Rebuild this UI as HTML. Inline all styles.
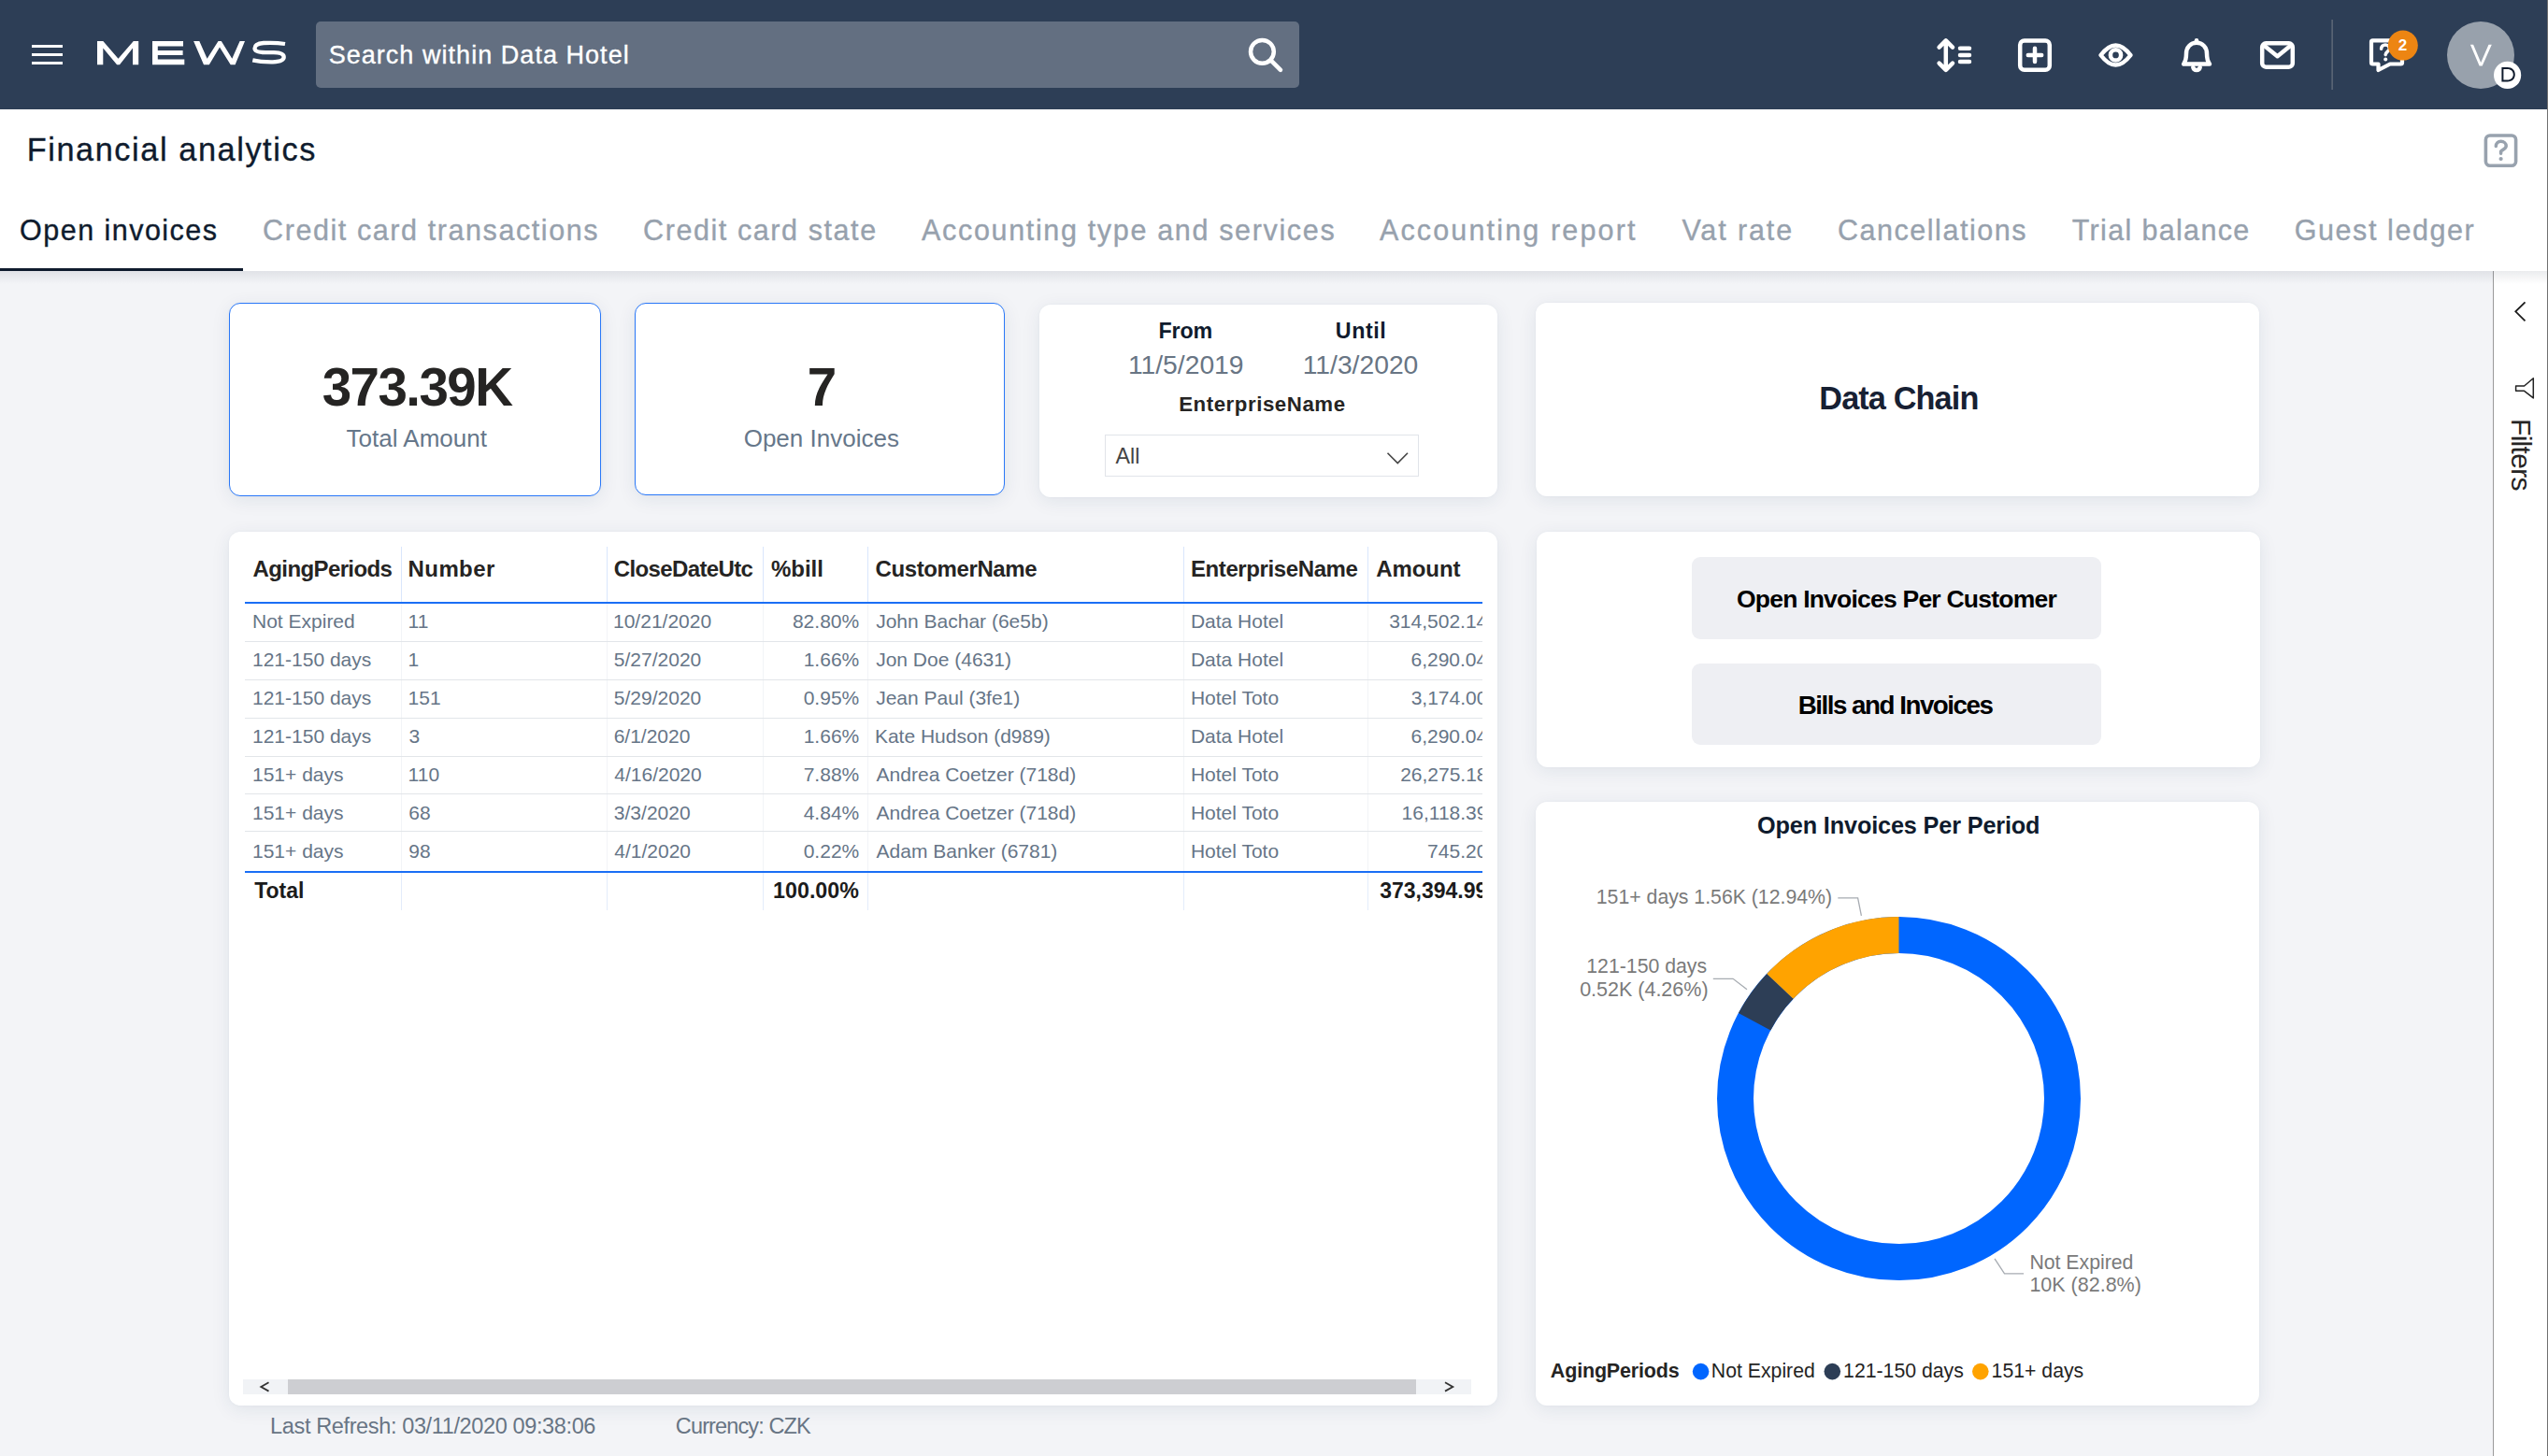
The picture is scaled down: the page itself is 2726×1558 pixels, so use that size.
<!DOCTYPE html>
<html><head><meta charset="utf-8"><title>Financial analytics</title>
<style>
*{box-sizing:border-box;margin:0;padding:0}
html,body{width:2726px;height:1558px;overflow:hidden;background:#f3f4f7;font-family:"Liberation Sans",sans-serif}
.a{position:absolute}
.t{position:absolute;white-space:pre;line-height:1;font-family:"Liberation Sans",sans-serif}
.mt{-webkit-text-stroke:0.35px currentColor}
#hdr{left:0;top:0;width:2725px;height:117px;background:#2d3e56}
#titlebar{left:0;top:117px;width:2725px;height:173px;background:#fff}
#content{left:0;top:290px;width:2667px;height:1268px;background:#f3f4f7;overflow:hidden}
#tabshadow{left:0;top:290px;width:2725px;height:14px;background:linear-gradient(rgba(60,70,90,.10),rgba(60,70,90,0))}
#fpane{left:2667px;top:290px;width:58px;height:1268px;background:#fff;border-left:1px solid #9a9a9a}
#rborder{left:2725px;top:0;width:1px;height:1558px;background:#707070}
.card{position:absolute;background:#fff;border-radius:12px;box-shadow:0 4px 20px rgba(25,55,90,.085),0 0 3px rgba(25,55,90,.04)}
.kpi{border:1.5px solid #2a78f8}
.hl{position:absolute;height:1px;background:#e2e5e9}
.vl{position:absolute;width:1px}
</style></head><body>
<div id="hdr" class="a">
 <div class="a" style="left:34px;top:48px;width:33px;height:3px;background:#fff"></div>
 <div class="a" style="left:34px;top:57px;width:33px;height:3px;background:#fff"></div>
 <div class="a" style="left:34px;top:66px;width:33px;height:3px;background:#fff"></div>
 <div class="a" style="left:338px;top:23px;width:1052px;height:71px;background:#636f81;border-radius:5px"></div>
</div>
<svg class="a" style="left:0;top:0" width="2726" height="117" viewBox="0 0 2726 117">
 <g fill="#fff">
  <path d="M104,44 L110.3,44 L126.5,62.7 L142.8,44 L148.2,44 L148.2,69.2 L142,69.2 L142,51.6 L128,69.2 L125.1,69.2 L110.3,51.6 L110.3,69.2 L104,69.2 Z"/>
  <path d="M163,44 L196,44 L196,49.6 L168.8,49.6 L168.8,54 L195.6,54 L195.6,59 L168.8,59 L168.8,63.5 L197.3,63.5 L197.3,69.2 L163,69.2 Z"/>
  <path d="M207.1,44 L213.3,44 L221.6,62.7 L233.5,44 L236.8,44 L248.3,62.7 L256.6,44 L262,44 L251.6,69.2 L246.7,69.2 L235,50.4 L223.8,69.2 L218,69.2 Z"/>
 </g>
 <path d="M305,47 C297,45.7 289,45.6 282,46 C275.5,46.5 272.5,48.8 272.5,51.7 C272.5,54.6 276,56 284,56.1 L293,56.2 C300.5,56.4 303.7,58.3 303.7,61.1 C303.7,64 300,66.1 292,66.3 C283.5,66.4 276.5,65.9 270.3,64.4" fill="none" stroke="#fff" stroke-width="4.3"/>
 <g fill="none" stroke="#fff" stroke-width="4.5" stroke-linecap="round" stroke-linejoin="round">
  <circle cx="1350.4" cy="55.3" r="12.4"/>
  <path d="M1360,64.8 L1370,74.8"/>
  <path d="M2081.8,43.5 L2081.8,74.8 M2074.6,50.6 L2081.8,43.4 L2089,50.6 M2074.6,67.6 L2081.8,74.8 L2089,67.6"/>
  <path d="M2097,51.8 L2107,51.8 M2097,58.9 L2107,58.9 M2097,65.9 L2107,65.9"/>
  <rect x="2161.2" y="43.4" width="31.6" height="31.4" rx="4.5"/>
  <path d="M2169.8,58.9 L2184.2,58.9 M2177,51.7 L2177,66.1"/>
  <path d="M2247.5,59 C2254,50.5 2258.5,48.4 2263.5,48.4 C2268.5,48.4 2273,50.5 2279.5,59 C2273,67.5 2268.5,69.6 2263.5,69.6 C2258.5,69.6 2254,67.5 2247.5,59 Z"/>
  <circle cx="2263.5" cy="58.9" r="5.6"/>
  <path d="M2336.2,68.6 L2364,68.6 C2361.3,65 2361,61 2361,57.5 C2361,50.3 2356.3,45.8 2350,45.8 C2343.7,45.8 2339,50.3 2339,57.5 C2339,61 2338.7,65 2336.2,68.6 Z"/>
  <path d="M2350,43.3 L2350,44.5"/>
  <path d="M2346.3,72 A3.8,3.8 0 0 0 2353.7,72"/>
  <rect x="2420.2" y="46.3" width="32.6" height="25.4" rx="4"/>
  <path d="M2422,48.6 L2436.5,60.2 L2451,48.6"/>
  <path d="M2540.5,43.3 L2568.5,43.3 C2569.5,43.3 2570,43.8 2570,44.8 L2570,67 C2570,68 2569.5,68.5 2568.5,68.5 L2557,68.5 L2544.5,75 L2544.5,68.5 L2538.5,68.5 C2537.5,68.5 2537,68 2537,67 L2537,44.8 C2537,43.8 2537.5,43.3 2538.5,43.3 Z" stroke-width="4.2"/>
 </g>
 <g fill="none" stroke="#fff" stroke-width="3.6" stroke-linecap="round">
  <path d="M2547.6,52.3 C2547.6,49.5 2549.6,48 2552,48 C2554.5,48 2556.4,49.6 2556.4,52 C2556.4,55 2552.2,55.5 2552.2,58.6"/>
 </g>
 <circle cx="2552.2" cy="63.6" r="2" fill="#fff"/>
 <rect x="2494.5" y="21" width="1.2" height="75" fill="#6b7380"/>
 <circle cx="2570.8" cy="48.6" r="16" fill="#ed8512"/>
 <circle cx="2654" cy="59" r="36" fill="#98a1ac"/>
 <path d="M2642.9,47.8 L2646.1,47.8 L2654.2,66.9 L2662.5,47.8 L2665.8,47.8 L2655.7,70.5 L2652.6,70.5 Z" fill="#fff"/>
 <circle cx="2682.6" cy="80.4" r="14.6" fill="#fff"/>
 <path fill-rule="evenodd" fill="#0f1b2d" d="M2676.4,72.1 L2682.6,72.1 C2687.7,72.1 2690.8,75.3 2690.8,79.75 C2690.8,84.2 2687.7,87.4 2682.6,87.4 L2676.4,87.4 Z M2678.4,74 L2682.6,74 C2686.4,74 2688.8,76.3 2688.8,79.75 C2688.8,83.2 2686.4,85.5 2682.6,85.5 L2678.4,85.5 Z"/>
</svg>
<div id="titlebar" class="a"></div>
<svg class="a" style="left:2640px;top:130px" width="70" height="60" viewBox="2640 130 70 60">
 <rect x="2659.4" y="145" width="32.2" height="32.2" rx="4.5" fill="none" stroke="#98a2ae" stroke-width="3.6"/>
 <path d="M2670.3,156.6 C2670.3,153.3 2672.6,151.3 2675.6,151.3 C2678.8,151.3 2681.2,153.4 2681.2,156.3 C2681.2,159.2 2677.2,159.8 2675.6,162 L2675.6,164.3" fill="none" stroke="#98a2ae" stroke-width="3.5" stroke-linecap="round"/>
 <circle cx="2675.6" cy="170" r="2.1" fill="#98a2ae"/>
</svg>
<div class="a" style="left:0;top:287px;width:260px;height:3px;background:#0f1b2d"></div>
<div id="content" class="a"></div>
<div id="fpane" class="a"></div>
<div id="tabshadow" class="a"></div>
<svg class="a" style="left:2668px;top:300px" width="57" height="240" viewBox="2668 300 57 240">
 <path d="M2701.5,323.3 L2691.3,333.3 L2701.5,343.3" fill="none" stroke="#1c1c1c" stroke-width="1.8"/>
 <path d="M2710.3,404.8 L2710.3,425.9 L2700.6,418.3 L2691.6,418.3 L2691.6,413 L2700.6,413 Z" fill="none" stroke="#222" stroke-width="1.5" stroke-linejoin="round"/>
</svg>
<div class="t" style="left:2688px;top:448px;font-size:30px;color:#252423;transform-origin:0 0;transform:translate(24px,0) rotate(90deg);letter-spacing:-0.7px">Filters</div>
<div id="rborder" class="a"></div>

<!-- cards -->
<div class="card kpi" style="left:245px;top:324px;width:398px;height:207px"></div>
<div class="card kpi" style="left:679px;top:324px;width:396px;height:206px"></div>
<div class="card" style="left:1112px;top:326px;width:490px;height:206px"></div>
<div class="a" style="left:1182px;top:465px;width:336px;height:45px;border:1px solid #e1e4e9;background:#fff"></div>
<svg class="a" style="left:1480px;top:480px" width="30" height="20" viewBox="1480 480 30 20">
 <path d="M1484.5,484.8 L1495.3,495.6 L1506,484.8" fill="none" stroke="#444" stroke-width="1.6"/>
</svg>
<div class="card" style="left:1643px;top:324px;width:774px;height:207px"></div>
<div class="card" style="left:245px;top:569px;width:1357px;height:935px"></div>
<div class="card" style="left:1644px;top:569px;width:774px;height:252px"></div>
<div class="a" style="left:1810px;top:596px;width:438px;height:88px;background:#eeeff3;border-radius:9px"></div>
<div class="a" style="left:1810px;top:710px;width:438px;height:87px;background:#eeeff3;border-radius:9px"></div>
<div class="card" style="left:1643px;top:858px;width:774px;height:646px"></div>

<!-- table grid -->
<div class="vl" style="left:429px;top:585px;height:60px;background:#d9e6fc"></div>
<div class="vl" style="left:649px;top:585px;height:60px;background:#d9e6fc"></div>
<div class="vl" style="left:816px;top:585px;height:60px;background:#d9e6fc"></div>
<div class="vl" style="left:928px;top:585px;height:60px;background:#d9e6fc"></div>
<div class="vl" style="left:1266px;top:585px;height:60px;background:#d9e6fc"></div>
<div class="vl" style="left:1463px;top:585px;height:60px;background:#d9e6fc"></div>
<div class="vl" style="left:429px;top:646px;height:287px;background:#f2f4f7"></div>
<div class="vl" style="left:649px;top:646px;height:287px;background:#f2f4f7"></div>
<div class="vl" style="left:816px;top:646px;height:287px;background:#f2f4f7"></div>
<div class="vl" style="left:928px;top:646px;height:287px;background:#f2f4f7"></div>
<div class="vl" style="left:1266px;top:646px;height:287px;background:#f2f4f7"></div>
<div class="vl" style="left:1463px;top:646px;height:287px;background:#f2f4f7"></div>
<div class="vl" style="left:429px;top:934px;height:40px;background:#e3ecfb"></div>
<div class="vl" style="left:649px;top:934px;height:40px;background:#e3ecfb"></div>
<div class="vl" style="left:816px;top:934px;height:40px;background:#e3ecfb"></div>
<div class="vl" style="left:928px;top:934px;height:40px;background:#e3ecfb"></div>
<div class="vl" style="left:1266px;top:934px;height:40px;background:#e3ecfb"></div>
<div class="vl" style="left:1463px;top:934px;height:40px;background:#e3ecfb"></div>
<div class="a" style="left:262px;top:644px;width:1324px;height:2px;background:#1a6ef5"></div>
<div class="hl" style="left:262px;top:686px;width:1324px"></div>
<div class="hl" style="left:262px;top:727px;width:1324px"></div>
<div class="hl" style="left:262px;top:768px;width:1324px"></div>
<div class="hl" style="left:262px;top:809px;width:1324px"></div>
<div class="hl" style="left:262px;top:849px;width:1324px"></div>
<div class="hl" style="left:262px;top:889px;width:1324px"></div>
<div class="a" style="left:262px;top:932px;width:1324px;height:2px;background:#1a6ef5"></div>
<!-- scrollbar -->
<div class="a" style="left:260px;top:1476px;width:1314px;height:16px;background:#f1f3f6"></div>
<div class="a" style="left:308px;top:1476px;width:1207px;height:16px;background:#cdced2"></div>
<svg class="a" style="left:270px;top:1474px" width="1300" height="20" viewBox="270 1474 1300 20">
 <path d="M287.5,1479.3 L279.3,1484 L287.5,1488.6" fill="none" stroke="#333" stroke-width="1.8"/>
 <path d="M1546,1479.3 L1554.3,1484 L1546,1488.6" fill="none" stroke="#333" stroke-width="1.8"/>
</svg>
<!-- donut -->
<svg class="a" style="left:1643px;top:858px" width="774" height="646" viewBox="1643 858 774 646">
 <g fill="none" stroke-width="39">
  <circle cx="2031.5" cy="1175.6" r="175" stroke="#0066ff"/>
 </g>
 <g fill="none" stroke-width="39"><path d="M1877.10,1093.23 A175,175 0 0 1 1904.39,1055.32" stroke="#2d3e56"/><path d="M1904.39,1055.32 A175,175 0 0 1 2031.50,1000.60" stroke="#ffa300"/></g>
 <g fill="none" stroke="#a6abb1" stroke-width="1.3">
  <path d="M1966.3,960.8 L1987.6,960.8 L1991.4,979.9"/>
  <path d="M1832.8,1047.3 L1854.1,1047.3 L1869,1058.7"/>
  <path d="M2134,1346.9 L2144.5,1362.9 L2165.1,1362.9"/>
 </g>
 <circle cx="1819.6" cy="1467.6" r="8.8" fill="#0066ff"/>
 <circle cx="1960.3" cy="1467.6" r="8.8" fill="#2d3e56"/>
 <circle cx="2118.8" cy="1467.6" r="8.8" fill="#ffa300"/>
</svg>
<div class="t mt" style="left:351.65px;top:46px;font-size:27.0px;color:#fff;letter-spacing:1.04px;">Search within Data Hotel</div>
<div class="t" style="left:2565.69px;top:40px;font-size:17.0px;color:#fff;font-weight:bold;">2</div>
<div class="t mt" style="left:28.66px;top:143px;font-size:34.25px;color:#0f1b2d;letter-spacing:1.60px;">Financial analytics</div>
<div class="t mt" style="left:21.08px;top:231px;font-size:30.5px;color:#0f1b2d;letter-spacing:1.47px;">Open invoices</div>
<div class="t mt" style="left:281.08px;top:231px;font-size:30.5px;color:#97a1ad;letter-spacing:1.58px;">Credit card transactions</div>
<div class="t mt" style="left:688.08px;top:231px;font-size:30.5px;color:#97a1ad;letter-spacing:1.58px;">Credit card state</div>
<div class="t mt" style="left:986.10px;top:231px;font-size:30.5px;color:#97a1ad;letter-spacing:1.66px;">Accounting type and services</div>
<div class="t mt" style="left:1475.90px;top:231px;font-size:30.5px;color:#97a1ad;letter-spacing:2.16px;">Accounting report</div>
<div class="t mt" style="left:1799.39px;top:231px;font-size:30.5px;color:#97a1ad;letter-spacing:1.89px;">Vat rate</div>
<div class="t mt" style="left:1965.88px;top:231px;font-size:30.5px;color:#97a1ad;letter-spacing:1.55px;">Cancellations</div>
<div class="t mt" style="left:2216.79px;top:231px;font-size:30.5px;color:#97a1ad;letter-spacing:1.33px;">Trial balance</div>
<div class="t mt" style="left:2454.67px;top:231px;font-size:30.5px;color:#97a1ad;letter-spacing:1.59px;">Guest ledger</div>
<div class="t" style="left:344.67px;top:387px;font-size:56.5px;color:#252423;font-weight:bold;letter-spacing:-1.54px;">373.39K</div>
<div class="t" style="left:370.58px;top:456px;font-size:26.0px;color:#66778a;">Total Amount</div>
<div class="t" style="left:863.64px;top:387px;font-size:56.5px;color:#252423;font-weight:bold;">7</div>
<div class="t" style="left:795.70px;top:456px;font-size:26.0px;color:#66778a;">Open Invoices</div>
<div class="t" style="left:1239.57px;top:343px;font-size:23.25px;color:#0f1b2d;font-weight:bold;letter-spacing:-0.17px;">From</div>
<div class="t" style="left:1428.81px;top:343px;font-size:23.25px;color:#0f1b2d;font-weight:bold;letter-spacing:0.56px;">Until</div>
<div class="t" style="left:1206.94px;top:376px;font-size:28.25px;color:#687584;">11/5/2019</div>
<div class="t" style="left:1393.74px;top:376px;font-size:28.25px;color:#687584;">11/3/2020</div>
<div class="t" style="left:1261.14px;top:422px;font-size:22.25px;color:#252423;font-weight:bold;letter-spacing:0.56px;">EnterpriseName</div>
<div class="t" style="left:1193.50px;top:477px;font-size:23.25px;color:#444;">All</div>
<div class="t" style="left:1946.30px;top:409px;font-size:34.25px;color:#172033;font-weight:bold;letter-spacing:-0.87px;">Data Chain</div>
<div class="t" style="left:1857.94px;top:628px;font-size:26.5px;color:#000;font-weight:bold;letter-spacing:-0.78px;">Open Invoices Per Customer</div>
<div class="t" style="left:1923.76px;top:741px;font-size:27.75px;color:#000;font-weight:bold;letter-spacing:-1.49px;">Bills and Invoices</div>
<div class="t" style="left:1880.09px;top:871px;font-size:25.25px;color:#0f1b2d;font-weight:bold;letter-spacing:-0.15px;">Open Invoices Per Period</div>
<div class="t" style="left:270.58px;top:597px;font-size:24.0px;color:#252423;font-weight:bold;letter-spacing:-0.61px;">AgingPeriods</div>
<div class="t" style="left:436.62px;top:597px;font-size:24.0px;color:#252423;font-weight:bold;letter-spacing:0.39px;">Number</div>
<div class="t" style="left:656.74px;top:597px;font-size:24.0px;color:#252423;font-weight:bold;letter-spacing:-0.62px;">CloseDateUtc</div>
<div class="t" style="left:824.88px;top:597px;font-size:24.0px;color:#252423;font-weight:bold;letter-spacing:0.02px;">%bill</div>
<div class="t" style="left:936.54px;top:597px;font-size:24.0px;color:#252423;font-weight:bold;letter-spacing:-0.39px;">CustomerName</div>
<div class="t" style="left:1273.92px;top:597px;font-size:24.0px;color:#252423;font-weight:bold;letter-spacing:-0.39px;">EnterpriseName</div>
<div class="t" style="left:1472.18px;top:597px;font-size:24.0px;color:#252423;font-weight:bold;letter-spacing:-0.07px;">Amount</div>
<div class="t" style="left:270.02px;top:654px;font-size:21.0px;color:#667587;">Not Expired</div>
<div class="t" style="left:436.62px;top:654px;font-size:21.0px;color:#667587;">11</div>
<div class="t" style="left:656.02px;top:654px;font-size:21.0px;color:#667587;">10/21/2020</div>
<div class="t" style="left:847.94px;top:654px;font-size:21.0px;color:#667587;">82.80%</div>
<div class="t" style="left:937.18px;top:654px;font-size:21.0px;color:#667587;">John Bachar (6e5b)</div>
<div class="t" style="left:1273.92px;top:654px;font-size:21.0px;color:#667587;">Data Hotel</div>
<div class="t" style="left:270.02px;top:695px;font-size:21.0px;color:#667587;">121-150 days</div>
<div class="t" style="left:436.62px;top:695px;font-size:21.0px;color:#667587;">1</div>
<div class="t" style="left:656.86px;top:695px;font-size:21.0px;color:#667587;">5/27/2020</div>
<div class="t" style="left:859.70px;top:695px;font-size:21.0px;color:#667587;">1.66%</div>
<div class="t" style="left:937.18px;top:695px;font-size:21.0px;color:#667587;">Jon Doe (4631)</div>
<div class="t" style="left:1273.92px;top:695px;font-size:21.0px;color:#667587;">Data Hotel</div>
<div class="t" style="left:270.02px;top:736px;font-size:21.0px;color:#667587;">121-150 days</div>
<div class="t" style="left:436.62px;top:736px;font-size:21.0px;color:#667587;">151</div>
<div class="t" style="left:656.86px;top:736px;font-size:21.0px;color:#667587;">5/29/2020</div>
<div class="t" style="left:859.70px;top:736px;font-size:21.0px;color:#667587;">0.95%</div>
<div class="t" style="left:937.18px;top:736px;font-size:21.0px;color:#667587;">Jean Paul (3fe1)</div>
<div class="t" style="left:1273.92px;top:736px;font-size:21.0px;color:#667587;">Hotel Toto</div>
<div class="t" style="left:270.02px;top:777px;font-size:21.0px;color:#667587;">121-150 days</div>
<div class="t" style="left:437.46px;top:777px;font-size:21.0px;color:#667587;">3</div>
<div class="t" style="left:656.65px;top:777px;font-size:21.0px;color:#667587;">6/1/2020</div>
<div class="t" style="left:859.70px;top:777px;font-size:21.0px;color:#667587;">1.66%</div>
<div class="t" style="left:935.92px;top:777px;font-size:21.0px;color:#667587;">Kate Hudson (d989)</div>
<div class="t" style="left:1273.92px;top:777px;font-size:21.0px;color:#667587;">Data Hotel</div>
<div class="t" style="left:270.02px;top:818px;font-size:21.0px;color:#667587;">151+ days</div>
<div class="t" style="left:436.62px;top:818px;font-size:21.0px;color:#667587;">110</div>
<div class="t" style="left:657.28px;top:818px;font-size:21.0px;color:#667587;">4/16/2020</div>
<div class="t" style="left:859.70px;top:818px;font-size:21.0px;color:#667587;">7.88%</div>
<div class="t" style="left:937.60px;top:818px;font-size:21.0px;color:#667587;">Andrea Coetzer (718d)</div>
<div class="t" style="left:1273.92px;top:818px;font-size:21.0px;color:#667587;">Hotel Toto</div>
<div class="t" style="left:270.02px;top:859px;font-size:21.0px;color:#667587;">151+ days</div>
<div class="t" style="left:437.25px;top:859px;font-size:21.0px;color:#667587;">68</div>
<div class="t" style="left:656.86px;top:859px;font-size:21.0px;color:#667587;">3/3/2020</div>
<div class="t" style="left:859.70px;top:859px;font-size:21.0px;color:#667587;">4.84%</div>
<div class="t" style="left:937.60px;top:859px;font-size:21.0px;color:#667587;">Andrea Coetzer (718d)</div>
<div class="t" style="left:1273.92px;top:859px;font-size:21.0px;color:#667587;">Hotel Toto</div>
<div class="t" style="left:270.02px;top:900px;font-size:21.0px;color:#667587;">151+ days</div>
<div class="t" style="left:437.25px;top:900px;font-size:21.0px;color:#667587;">98</div>
<div class="t" style="left:657.28px;top:900px;font-size:21.0px;color:#667587;">4/1/2020</div>
<div class="t" style="left:859.70px;top:900px;font-size:21.0px;color:#667587;">0.22%</div>
<div class="t" style="left:937.60px;top:900px;font-size:21.0px;color:#667587;">Adam Banker (6781)</div>
<div class="t" style="left:1273.92px;top:900px;font-size:21.0px;color:#667587;">Hotel Toto</div>
<div class="t" style="left:272.17px;top:942px;font-size:23.0px;color:#1b1b1b;font-weight:bold;">Total</div>
<div class="t" style="left:827.11px;top:942px;font-size:23.25px;color:#1b1b1b;font-weight:bold;">100.00%</div>
<div class="t" style="left:1707.80px;top:950px;font-size:21.25px;color:#7a7a7a;">151+ days 1.56K (12.94%)</div>
<div class="t" style="left:1697.30px;top:1024px;font-size:21.25px;color:#7a7a7a;">121-150 days</div>
<div class="t" style="left:1690.14px;top:1049px;font-size:21.5px;color:#7a7a7a;">0.52K (4.26%)</div>
<div class="t" style="left:2171.40px;top:1341px;font-size:21.25px;color:#7a7a7a;">Not Expired</div>
<div class="t" style="left:2171.38px;top:1365px;font-size:21.5px;color:#7a7a7a;">10K (82.8%)</div>
<div class="t" style="left:1658.86px;top:1457px;font-size:21.5px;color:#252423;font-weight:bold;letter-spacing:-0.18px;">AgingPeriods</div>
<div class="t" style="left:1830.80px;top:1457px;font-size:21.25px;color:#252423;">Not Expired</div>
<div class="t" style="left:1972.10px;top:1457px;font-size:21.25px;color:#252423;">121-150 days</div>
<div class="t" style="left:2130.60px;top:1457px;font-size:21.25px;color:#252423;">151+ days</div>
<div class="t" style="left:289.12px;top:1515px;font-size:23.5px;color:#687584;letter-spacing:-0.37px;">Last Refresh: 03/11/2020 09:38:06</div>
<div class="t" style="left:722.83px;top:1515px;font-size:23.5px;color:#687584;letter-spacing:-0.87px;">Currency: CZK</div>
<div class="a" style="left:0;top:0;width:1586px;height:1000px;overflow:hidden">
<div class="t" style="left:1486.16px;top:654px;font-size:21.0px;color:#667587;">314,502.14</div>
<div class="t" style="left:1509.47px;top:695px;font-size:21.0px;color:#667587;">6,290.04</div>
<div class="t" style="left:1509.68px;top:736px;font-size:21.0px;color:#667587;">3,174.00</div>
<div class="t" style="left:1509.47px;top:777px;font-size:21.0px;color:#667587;">6,290.04</div>
<div class="t" style="left:1498.13px;top:818px;font-size:21.0px;color:#667587;">26,275.18</div>
<div class="t" style="left:1499.60px;top:859px;font-size:21.0px;color:#667587;">16,118.39</div>
<div class="t" style="left:1527.11px;top:900px;font-size:21.0px;color:#667587;">745.20</div>
<div class="t" style="left:1476.22px;top:942px;font-size:23.0px;color:#1b1b1b;font-weight:bold;">373,394.99</div>
</div>
</body></html>
